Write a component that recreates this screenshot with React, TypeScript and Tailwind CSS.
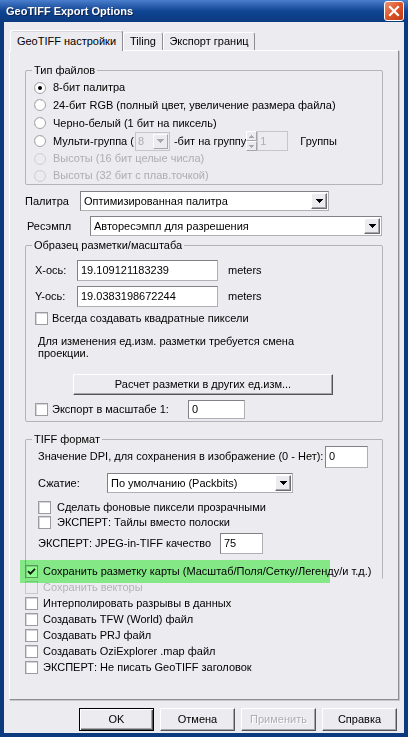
import React from 'react';

const Tri = ({ disabled }: { disabled?: boolean }) => (
  <svg width="7" height="4" viewBox="0 0 7 4" className={disabled ? 'fill-[#a9a8ad]' : 'fill-black'}>
    <path d="M0 0h7v1h-1v1h-1v1h-1v1h-1v-1h-1v-1h-1v-1h-1z" />
  </svg>
);

const Radio = ({ checked, disabled, label, h }: { checked?: boolean; disabled?: boolean; label: string; h: string }) => (
  <div className={`flex items-center ${h}`}>
    <svg width="12" height="12" viewBox="0 0 12 12" className="shrink-0">
      <circle cx="6" cy="6" r="5.5" fill={disabled ? '#ecebf0' : '#fff'} stroke={disabled ? '#cfced4' : '#a3a2a8'} />
      <path d="M1.5 8.5A5 5 0 0 1 8.5 1.5" fill="none" stroke={disabled ? '#d8d7dc' : '#b9b8be'} />
      {checked && <circle cx="6" cy="6" r="2" fill="#000" />}
    </svg>
    <span className={`ml-[7px] whitespace-nowrap ${disabled ? 'text-[#aeadb3]' : ''}`}>{label}</span>
  </div>
);

const Box = ({ checked, disabled }: { checked?: boolean; disabled?: boolean }) => (
  <div
    className={`w-[13px] h-[13px] shrink-0 border flex items-center justify-center ${
      disabled ? 'bg-[#ecebf0] border-[#c9c8ce]' : 'bg-white border-[#9c9ba1] shadow-[inset_1px_1px_0_#d6d5db]'
    }`}
  >
    {checked && (
      <svg width="9" height="9" viewBox="0 0 9 9">
        <path d="M1 4.2 L3.4 6.6 L8 1.8" fill="none" stroke="#1a1a1a" strokeWidth="1.9" />
      </svg>
    )}
  </div>
);

const Edit = ({ value, className }: { value: string; className: string }) => (
  <div
    className={`bg-white border border-[#b0afb5] border-t-[#828187] border-l-[#828187] pl-[3px] flex items-center shrink-0 ${className}`}
  >
    {value}
  </div>
);

const Combo = ({ value, className }: { value: string; className: string }) => (
  <div
    className={`h-[20px] bg-white border border-[#b0afb5] border-t-[#828187] border-l-[#828187] flex items-stretch shrink-0 ${className}`}
  >
    <span className="flex-1 pl-[3px] flex items-center whitespace-nowrap">{value}</span>
    <div className="w-[16px] m-[1px] border border-t-white border-l-white border-r-[#6c6b71] border-b-[#6c6b71] bg-[#ecebf0] shadow-[inset_-1px_-1px_0_#a6a5ab] flex items-center justify-center">
      <Tri />
    </div>
  </div>
);

const Btn = ({ label, def, disabled, className }: { label: string; def?: boolean; disabled?: boolean; className: string }) => (
  <div
    className={`bg-[#ecebf0] flex items-center justify-center shrink-0 border ${
      def
        ? 'border-black shadow-[inset_1px_1px_0_#fff,inset_-1px_-1px_0_#555459,inset_-2px_-2px_0_#a6a5ab]'
        : 'border-t-white border-l-white border-r-[#555459] border-b-[#555459] shadow-[inset_-1px_-1px_0_#a6a5ab]'
    } ${disabled ? 'text-[#aeadb3] [text-shadow:1px_1px_0_#fff]' : ''} ${className}`}
  >
    {label}
  </div>
);

const CheckRow = ({ checked, disabled, label, gap, h }: { checked?: boolean; disabled?: boolean; label: string; gap: string; h: string }) => (
  <div className={`flex items-center ${h}`}>
    <Box checked={checked} disabled={disabled} />
    <span className={`${gap} whitespace-nowrap ${disabled ? 'text-[#b4b3b9]' : ''}`}>{label}</span>
  </div>
);

export default function App() {
  return (
    <div className="w-[408px] h-[737px] bg-[#0c3a7e] flex flex-col font-['Liberation_Sans',Arial,sans-serif] text-[11px] leading-[13px] text-black overflow-hidden">
      {/* title bar */}
      <div className="h-[22px] shrink-0 flex items-center pl-[6px] pr-[4px] bg-gradient-to-b from-[#4a7fce] via-[#0f4594] to-[#0b3a80]">
        <span className="flex-1 text-white font-bold text-[11px] [text-shadow:1px_1px_0_#0a1f4a]">GeoTIFF Export Options</span>
        <div className="w-[20px] h-[20px] rounded-[3px] border border-white bg-gradient-to-br from-[#ee9370] via-[#dc5228] to-[#c23a12] flex items-center justify-center">
          <svg width="12" height="12" viewBox="0 0 12 12">
            <path d="M2 2 L10 10 M10 2 L2 10" stroke="#fff" strokeWidth="2.2" strokeLinecap="square" />
          </svg>
        </div>
      </div>

      <div className="flex-1 mx-[4px] mb-[4px] bg-[#ecebf0] flex flex-col">
        {/* tabs */}
        <div className="flex items-end pl-[6px] pt-[8px]">
          <div className="w-[113px] h-[21px] -mb-px relative z-10 bg-[#ecebf0] border border-b-0 border-t-white border-l-white border-r-[#8e8d93] rounded-t-[3px] shadow-[inset_0_1px_0_#d8d7dc] flex items-center justify-center">
            GeoTIFF настройки
          </div>
          <div className="w-[40px] h-[18px] border border-b-0 border-t-white border-l-white border-r-[#8e8d93] rounded-t-[3px] flex items-center justify-center">
            Tiling
          </div>
          <div className="w-[92px] h-[18px] border border-b-0 border-t-white border-l-white border-r-[#8e8d93] rounded-t-[3px] flex items-center justify-center">
            Экспорт границ
          </div>
        </div>

        {/* panel */}
        <div className="ml-[5px] w-[390px] h-[650px] border border-t-white border-l-white border-r-[#8e8d93] border-b-[#8e8d93] shadow-[1px_1px_0_#c8c7cd] px-[15px] pt-[13px] flex flex-col">
          <fieldset className="border border-[#b4b3b9] rounded-[2px]">
            <legend className="ml-[6px] px-[2px] leading-[13px]">Тип файлов</legend>
            <div className="pl-[8px] pt-[2px]">
              <Radio checked label="8-бит палитра" h="h-[17px]" />
              <Radio label="24-бит RGB (полный цвет, увеличение размера файла)" h="h-[18px]" />
              <Radio label="Черно-белый (1 бит на пиксель)" h="h-[18px]" />
              <div className="flex items-center h-[18px]">
                <Radio label="Мульти-группа (" h="h-[18px]" />
                <div className="ml-[1px] w-[35px] h-[19px] border border-[#c6c5cb] bg-[#ecebf0] flex items-stretch">
                  <span className="flex-1 pl-[2px] flex items-center text-[#aeadb3]">8</span>
                  <div className="w-[15px] m-[1px] border border-t-white border-l-white border-r-[#a6a5ab] border-b-[#a6a5ab] flex items-center justify-center">
                    <Tri disabled />
                  </div>
                </div>
                <span className="ml-[4px] whitespace-nowrap">-бит на группу</span>
                <div className="w-[11px] h-[20px] flex flex-col shrink-0">
                  <div className="flex-1 border border-t-white border-l-white border-r-[#a6a5ab] border-b-[#a6a5ab] flex items-center justify-center">
                    <svg width="5" height="3" viewBox="0 0 5 3" className="fill-[#a9a8ad]"><path d="M2 0h1v1h1v1h1v1h-5v-1h1v-1h1z" /></svg>
                  </div>
                  <div className="flex-1 border border-t-white border-l-white border-r-[#a6a5ab] border-b-[#a6a5ab] flex items-center justify-center">
                    <svg width="5" height="3" viewBox="0 0 5 3" className="fill-[#a9a8ad]"><path d="M0 0h5v1h-1v1h-1v1h-1v-1h-1v-1h-1z" /></svg>
                  </div>
                </div>
                <div className="w-[31px] h-[20px] border border-[#c6c5cb] bg-[#ecebf0] pl-[2px] flex items-center text-[#aeadb3]">1</div>
                <span className="ml-[12px]">Группы</span>
              </div>
              <Radio disabled label="Высоты (16 бит целые числа)" h="h-[17px]" />
              <Radio disabled label="Высоты (32 бит с плав.точкой)" h="h-[17px]" />
            </div>
          </fieldset>

          <div className="mt-[6px] flex items-center h-[20px]">
            <span className="w-[55px]">Палитра</span>
            <Combo value="Оптимизированная палитра" className="w-[249px]" />
          </div>
          <div className="mt-[5px] flex items-center h-[20px] pl-[2px]">
            <span className="w-[63px]">Ресэмпл</span>
            <Combo value="Авторесэмпл для разрешения" className="w-[292px]" />
          </div>

          <fieldset className="mt-[3px] border border-[#b4b3b9] rounded-[2px]">
            <legend className="ml-[6px] px-[2px] leading-[13px]">Образец разметки/масштаба</legend>
            <div className="pl-[9px] pb-[2px] flex flex-col">
              <div className="mt-[8px] flex items-center h-[21px]">
                <span className="w-[42px]">X-ось:</span>
                <Edit value="19.109121183239" className="w-[141px] h-[21px]" />
                <span className="ml-[10px]">meters</span>
              </div>
              <div className="mt-[5px] flex items-center h-[21px]">
                <span className="w-[42px]">Y-ось:</span>
                <Edit value="19.0383198672244" className="w-[141px] h-[21px]" />
                <span className="ml-[10px]">meters</span>
              </div>
              <div className="mt-[5px]">
                <CheckRow label="Всегда создавать квадратные пиксели" gap="ml-[4px]" h="h-[13px]" />
              </div>
              <p className="mt-[10px] pl-[3px] leading-[12px]">
                Для изменения ед.изм. разметки требуется смена
                <br />
                проекции.
              </p>
              <Btn label="Расчет разметки в других ед.изм..." className="mt-[15px] ml-[38px] w-[260px] h-[21px]" />
              <div className="mt-[5px] flex items-center h-[19px]">
                <div className="w-[153px] flex items-center">
                  <Box />
                  <span className="ml-[4px]">Экспорт в масштабе 1:</span>
                </div>
                <Edit value="0" className="w-[57px] h-[19px]" />
              </div>
            </div>
          </fieldset>

          <fieldset className="mt-[11px] border border-[#b4b3b9] border-b-transparent rounded-t-[2px]">
            <legend className="ml-[6px] px-[2px] leading-[13px]">TIFF формат</legend>
            <div className="pl-[12px] pb-[24px] flex flex-col">
              <div className="flex items-center h-[21px]">
                <span className="w-[287px] whitespace-nowrap">Значение DPI, для сохранения в изображение (0 - Нет):</span>
                <Edit value="0" className="w-[43px] h-[22px]" />
              </div>
              <div className="mt-[6px] flex items-center h-[20px]">
                <span className="w-[69px]">Сжатие:</span>
                <Combo value="По умолчанию (Packbits)" className="w-[186px]" />
              </div>
              <div className="mt-[7px]">
                <CheckRow label="Сделать фоновые пиксели прозрачными" gap="ml-[6px]" h="h-[15px]" />
                <CheckRow label="ЭКСПЕРТ: Тайлы вместо полоски" gap="ml-[6px]" h="h-[15px]" />
              </div>
              <div className="mt-[3px] flex items-center h-[21px]">
                <span className="w-[182px] whitespace-nowrap">ЭКСПЕРТ: JPEG-in-TIFF качество</span>
                <Edit value="75" className="w-[43px] h-[21px]" />
              </div>
            </div>
          </fieldset>

          <div className="relative -mt-[16px] bg-transparent">
            <CheckRow checked label="Сохранить разметку карты (Масштаб/Поля/Сетку/Легенду/и т.д.)" gap="ml-[5px]" h="h-[16px]" />
            <CheckRow disabled label="Сохранить векторы" gap="ml-[5px]" h="h-[16px]" />
            <CheckRow label="Интерполировать разрывы в данных" gap="ml-[5px]" h="h-[16px]" />
            <CheckRow label="Создавать TFW (World) файл" gap="ml-[5px]" h="h-[16px]" />
            <CheckRow label="Создавать PRJ файл" gap="ml-[5px]" h="h-[16px]" />
            <CheckRow label="Создавать OziExplorer .map файл" gap="ml-[5px]" h="h-[16px]" />
            <CheckRow label="ЭКСПЕРТ: Не писать GeoTIFF заголовок" gap="ml-[5px]" h="h-[16px]" />
            {/* highlight marker over the first option */}
            <div className="absolute left-[-5px] top-[-3px] w-[310px] h-[23px] bg-[#90fc8f] mix-blend-multiply pointer-events-none" />
          </div>
        </div>

        {/* bottom buttons */}
        <div className="mt-[8px] flex justify-end gap-[6px] pr-[7px]">
          <Btn def label="OK" className="w-[75px] h-[23px]" />
          <Btn label="Отмена" className="w-[75px] h-[23px]" />
          <Btn disabled label="Применить" className="w-[75px] h-[23px]" />
          <Btn label="Справка" className="w-[75px] h-[23px]" />
        </div>
      </div>
    </div>
  );
}
